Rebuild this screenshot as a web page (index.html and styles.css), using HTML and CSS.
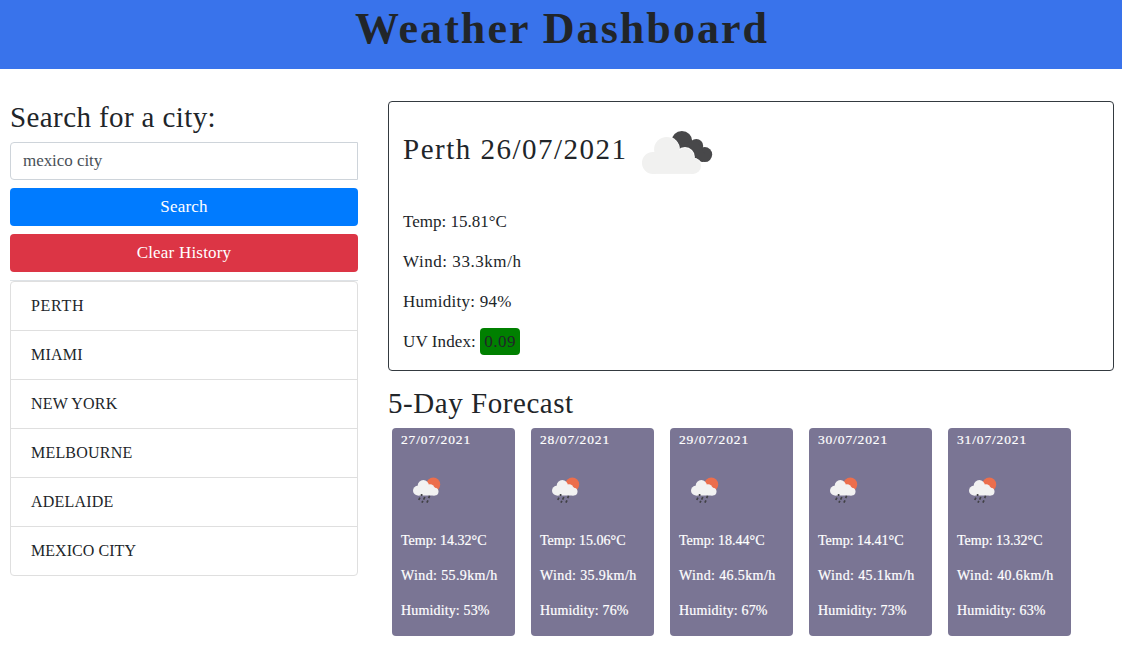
FILE: index.html
```html
<!DOCTYPE html>
<html lang="en">
<head>
<meta charset="utf-8">
<title>Weather Dashboard</title>
<link rel="stylesheet" href="styles.css">
</head>
<body>
<svg class="defs" width="0" height="0">
  <symbol id="rain" viewBox="0 0 50 50">
    <circle cx="32.3" cy="19.5" r="6.9" fill="#ec6e4c"/>
    <g fill="#f2f2f2"><circle cx="16.9" cy="25.6" r="4.9"/><circle cx="22.3" cy="20.6" r="5.6"/><circle cx="29" cy="23.8" r="4.6"/><circle cx="33.6" cy="26.6" r="3.9"/><rect x="16.9" y="22" width="16.7" height="8.5"/></g>
    <path d="M20.6 29v2M18.9 32.6l-1.1 2.4M23.8 32l-1.2 2.7M28.6 30.8l-.9 2.3M21.9 35.8l-1 1.9M27 35.3l-1.1 2.4" stroke="#414145" stroke-width="1.7" fill="none"/>
  </symbol>
</svg>
<header class="banner"><h1>Weather Dashboard</h1></header>
<main class="layout">
  <aside class="sidebar">
    <h3 class="search-title">Search for a city:</h3>
    <input class="field" type="text" value="mexico city">
    <button class="btn btn-search">Search</button>
    <button class="btn btn-clear">Clear History</button>
    <div class="history">
      <ul>
        <li class="wide">PERTH</li><li>MIAMI</li><li>NEW YORK</li><li>MELBOURNE</li><li>ADELAIDE</li><li class="tight">MEXICO CITY</li>
      </ul>
    </div>
  </aside>
  <section class="content">
    <div class="current">
      <div class="current-head">
        <h3 class="city">Perth 26/07/2021</h3>
        <svg width="100" height="100" viewBox="0 0 100 100">
          <g fill="#48484a"><circle cx="54.9" cy="39.3" r="10.4"/><circle cx="69.3" cy="43.9" r="6.9"/><circle cx="77.7" cy="52.6" r="7.5"/><path d="M54 42l15-4 9 14-2 8-18-4z"/></g>
          <g fill="#fff"><circle cx="39.7" cy="47.5" r="13.2"/><circle cx="58" cy="54.9" r="9.9"/><circle cx="66" cy="64.4" r="8.9"/></g>
          <g fill="#f1f1f0"><circle cx="26" cy="60.9" r="11"/><circle cx="39.7" cy="47.5" r="12.6"/><circle cx="58" cy="54.9" r="8.8"/><circle cx="66" cy="63.9" r="8"/><rect x="26" y="50.3" width="40" height="21.6"/></g>
        </svg>
      </div>
      <p class="temp">Temp: 15.81°C</p>
      <p class="wind">Wind: 33.3km/h</p>
      <p class="humidity">Humidity: 94%</p>
      <p class="uv">UV Index: <span class="badge">0.09</span></p>
    </div>
    <h3 class="forecast-title">5-Day Forecast</h3>
    <div class="forecast">
      <div class="day"><p class="date">27/07/2021</p><svg class="icon"><use href="#rain"/></svg><p class="day-temp">Temp: 14.32°C</p><p class="wind">Wind: 55.9km/h</p><p>Humidity: 53%</p></div>
      <div class="day"><p class="date">28/07/2021</p><svg class="icon"><use href="#rain"/></svg><p class="day-temp">Temp: 15.06°C</p><p class="wind">Wind: 35.9km/h</p><p>Humidity: 76%</p></div>
      <div class="day"><p class="date">29/07/2021</p><svg class="icon"><use href="#rain"/></svg><p class="day-temp">Temp: 18.44°C</p><p class="wind">Wind: 46.5km/h</p><p>Humidity: 67%</p></div>
      <div class="day"><p class="date">30/07/2021</p><svg class="icon"><use href="#rain"/></svg><p class="day-temp">Temp: 14.41°C</p><p class="wind">Wind: 45.1km/h</p><p>Humidity: 73%</p></div>
      <div class="day"><p class="date">31/07/2021</p><svg class="icon"><use href="#rain"/></svg><p class="day-temp">Temp: 13.32°C</p><p class="wind">Wind: 40.6km/h</p><p>Humidity: 63%</p></div>
    </div>
  </section>
</main>
</body>
</html>
```
FILE: styles.css
```css
* { box-sizing: border-box; }
body { margin: 0; background: #fff; color: #212529; font: 17px/24px Georgia, "Liberation Serif", serif; }
h1, h3, p, ul { margin: 0; padding: 0; }
.defs { display: block; }
.banner { height: 69px; padding: 4px 0 0 2px; background: #3973eb; text-align: center; }
.banner h1 { font-size: 44px; line-height: 50px; letter-spacing: 2.05px; font-weight: 700; }
.layout { display: grid; grid-template-columns: 348px 726px; column-gap: 30px; padding: 32px 0 0 10px; }
h3 { font-size: 29px; line-height: 33px; font-weight: 400; }
.sidebar { display: flex; flex-direction: column; gap: 8px; }
.search-title { letter-spacing: .4px; }
.field { height: 38px; width: 100%; padding: 6px 12px; border: 1px solid #ced4da; border-radius: 4px 0 0 4px; color: #495057; font: inherit; letter-spacing: -.05px; outline: 0; }
.btn { height: 38px; border: 0; border-radius: 4px; color: #fff; font: inherit; letter-spacing: .2px; }
.btn-search { background: #007bff; }
.btn-clear { background: #dc3545; }
.history { border-top: 1px solid #dee2e6; }
.history ul { list-style: none; border: 1px solid #dfdfdf; border-radius: 4px; font-size: 16px; }
.history li { height: 49px; padding: 12px 20px; border-bottom: 1px solid #dfdfdf; letter-spacing: .2px; }
.history li.wide { letter-spacing: .7px; }
.history li.tight { letter-spacing: .05px; }
.history li:last-child { height: 48px; border-bottom: 0; }
.current { height: 270px; padding: 0 14px; border: 1px solid #343a40; border-radius: 4px; }
.current-head { display: flex; height: 100px; margin-bottom: 8px; }
.city { width: 224px; padding-top: 31px; letter-spacing: 1.5px; white-space: nowrap; }
.current p { margin-bottom: 16px; }
.current .temp { letter-spacing: 0; }
.current .wind { letter-spacing: .55px; }
.current .humidity { letter-spacing: .25px; }
.current .uv { letter-spacing: .1px; }
.badge { display: inline-block; height: 27px; margin: -2px 0; padding: 2px 4px; border-radius: 4px; background: #008000; letter-spacing: .5px; }
.forecast-title { margin-top: 16px; letter-spacing: .55px; }
.forecast { display: grid; grid-template-columns: repeat(5, 123px); column-gap: 16px; margin: 8px 0 0 4px; }
.day { height: 208px; padding: 2px 0 0 9px; border-radius: 4px; background: #7a7594; color: #fff; font-size: 14px; line-height: 19px; letter-spacing: .15px; -webkit-text-stroke: .2px #fff; }
.day p { margin-bottom: 16px; white-space: nowrap; }
.day .date { font-size: 13.5px; letter-spacing: .85px; }
.day .day-temp { letter-spacing: 0; }
.day .wind { letter-spacing: .38px; }
.icon { display: block; width: 50px; height: 50px; margin-bottom: 16px; }
```
